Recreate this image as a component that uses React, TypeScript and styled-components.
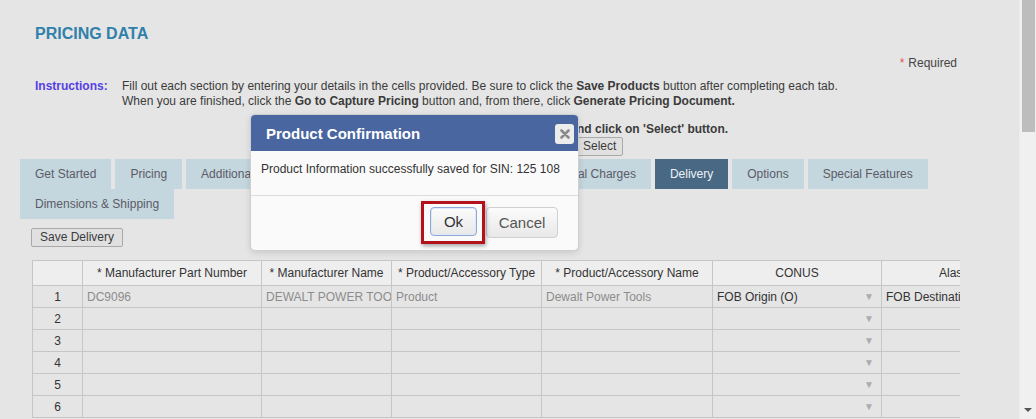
import React from "react";
import styled, { createGlobalStyle } from "styled-components";

const Global = createGlobalStyle`
  html, body { margin: 0; padding: 0; }
  body {
    background: #e5e5e5;
    font-family: "Liberation Sans", Arial, sans-serif;
    font-size: 12px;
    color: #3b3b3b;
    overflow: hidden;
  }
`;

const Shell = styled.div`
  display: flex;
  width: 1036px;
  height: 419px;
  overflow: hidden;
  position: relative;
`;

const Main = styled.div`
  flex: 1;
  min-width: 0;
  display: flex;
  flex-direction: column;
  padding: 24px 0 0 0;
`;

const Scrollbar = styled.div`
  width: 17px;
  background: #f0f0f0;
  display: flex;
  flex-direction: column;
  align-items: center;
  justify-content: space-between;
  padding: 0 2px 4px;
  box-sizing: border-box;
  border-left: 1px solid #ececec;
`;

const Thumb = styled.div`
  width: 13px;
  height: 132px;
  background: #bdbdbd;
`;

const Arrow = styled.div`
  width: 0;
  height: 0;
  border-left: 4px solid transparent;
  border-right: 4px solid transparent;
  border-top: 4px solid #555;
  margin-bottom: 3px;
`;

const Title = styled.h1`
  margin: 0 0 0 35px;
  font-size: 16px;
  line-height: 19px;
  font-weight: bold;
  color: #2f80aa;
`;

const RequiredRow = styled.div`
  display: flex;
  justify-content: flex-end;
  padding-right: 62px;
  margin-top: 13px;
  font-size: 12px;
  line-height: 14px;
  color: #444;
`;

const Star = styled.span`
  color: #e05555;
  margin-right: 4px;
`;

const Instructions = styled.div`
  display: grid;
  grid-template-columns: 87px 1fr;
  margin: 9px 0 0 35px;
  line-height: 15px;
`;

const Label = styled.div`
  color: #5540e6;
  font-weight: bold;
`;

const Lines = styled.div`
  display: flex;
  flex-direction: column;
`;

const StepLine = styled.div`
  margin-top: 13px;
  font-weight: bold;
  padding-left: 315px;
`;

const SelectRow = styled.div`
  display: flex;
  align-items: center;
  gap: 4px;
  padding-left: 442px;
  margin-top: 1px;
`;

const FakeSelect = styled.div`
  width: 128px;
  height: 16px;
  border: 1px solid #aaa;
  background: #f4f4f4;
`;

const PlainButton = styled.button<{ $pad?: number }>`
  font-family: "Liberation Sans", Arial, sans-serif;
  font-size: 12px;
  color: #3b3b3b;
  background: #e0e0e0;
  border: 1px solid #a9a9a9;
  border-radius: 2px;
  padding: 0 ${(p) => p.$pad ?? 8}px;
  height: 19px;
  line-height: 17px;
`;

const Tabs = styled.div`
  display: flex;
  flex-wrap: wrap;
  column-gap: 4px;
  width: 920px;
  margin: 3px 0 0 20px;
`;

const Tab = styled.div<{ $active?: boolean }>`
  height: 30px;
  line-height: 30px;
  padding: 0 15px;
  font-size: 12px;
  background: ${(p) => (p.$active ? "#486884" : "#c4d6de")};
  color: ${(p) => (p.$active ? "#eef2f6" : "#5b5b66")};
`;

const SaveRow = styled.div`
  margin: 9px 0 0 31px;
  display: flex;
`;

const TableWrap = styled.div`
  margin: 13px 0 0 32px;
  width: 928px;
  overflow: hidden;
`;

const Table = styled.table`
  border-collapse: collapse;
  table-layout: fixed;
  width: 1000px;
`;

const Th = styled.th`
  height: 24px;
  background: #eeeeee;
  border: 1px solid #c6c6c6;
  font-weight: normal;
  font-size: 12px;
  color: #333;
  text-align: center;
  white-space: nowrap;
  overflow: hidden;
  padding: 0 4px;
`;

const Td = styled.td<{ $num?: boolean; $muted?: boolean }>`
  height: 21px;
  border: 1px solid #c6c6c6;
  font-size: 12px;
  color: ${(p) => (p.$muted ? "#8c8c8c" : "#333")};
  text-align: ${(p) => (p.$num ? "center" : "left")};
  white-space: nowrap;
  overflow: hidden;
  padding: 0 4px;
`;

const DropCell = styled.div`
  display: flex;
  justify-content: space-between;
  align-items: center;
`;

const DropArrow = styled.span`
  font-size: 10px;
  color: #acacac;
  margin-right: 3px;
`;

/* modal */
const Modal = styled.div`
  position: absolute;
  left: 250px;
  top: 114px;
  width: 329px;
  height: 137px;
  background: #fafafa;
  border: 1px solid #cfcfcf;
  border-radius: 5px;
  box-shadow: 0 2px 6px rgba(0, 0, 0, 0.12);
  display: flex;
  flex-direction: column;
  box-sizing: border-box;
  overflow: hidden;
`;

const ModalHead = styled.div`
  height: 36px;
  background: #4966a0;
  display: flex;
  align-items: center;
  justify-content: space-between;
  padding: 0 4px 0 15px;
  flex-shrink: 0;
`;

const ModalTitle = styled.div`
  font-size: 15px;
  font-weight: bold;
  color: #fff;
`;

const CloseBtn = styled.div`
  width: 19px;
  height: 20px;
  background: #ececec;
  border-radius: 3px;
  display: flex;
  align-items: center;
  justify-content: center;
  margin-top: 1px;
`;

const ModalBody = styled.div`
  height: 45px;
  padding: 11px 10px 0;
  box-sizing: border-box;
  font-size: 12px;
  color: #333;
  border-bottom: 1px solid #dcdcdc;
`;

const ModalFoot = styled.div`
  flex: 1;
  display: flex;
  justify-content: flex-end;
  align-items: flex-start;
  gap: 9px;
  padding: 11px 20px 0 0;
`;

const Highlight = styled.div`
  position: relative;
  &::after {
    content: "";
    position: absolute;
    left: -9px;
    top: -6px;
    width: 58px;
    height: 37px;
    border: 3px solid #b3121a;
    box-shadow: 1px 2px 4px rgba(0, 0, 0, 0.35);
  }
`;

const DlgButton = styled.button<{ $focus?: boolean }>`
  font-family: "Liberation Sans", Arial, sans-serif;
  font-size: 15px;
  height: ${(p) => (p.$focus ? "29px" : "31px")};
  width: ${(p) => (p.$focus ? "47px" : "72px")};
  padding: 0;
  border-radius: 4px;
  color: ${(p) => (p.$focus ? "#333" : "#555")};
  border: 1px solid ${(p) => (p.$focus ? "#8ea9d6" : "#d0d0d0")};
  background: linear-gradient(#fbfbfb, #e8e8e8);
  box-shadow: ${(p) => (p.$focus ? "inset 0 0 0 1px #dfe8f6" : "none")};
`;

const rows = [
  { n: 1, part: "DC9096", maker: "DEWALT POWER TOOLS", type: "Product", name: "Dewalt Power Tools", conus: "FOB Origin (O)", alaska: "FOB Destination" },
  { n: 2 }, { n: 3 }, { n: 4 }, { n: 5 }, { n: 6 },
] as Array<{ n: number; part?: string; maker?: string; type?: string; name?: string; conus?: string; alaska?: string }>;

export default function App() {
  return (
    <Shell>
      <Global />
      <Main>
        <Title>PRICING DATA</Title>
        <RequiredRow>
          <Star>*</Star>Required
        </RequiredRow>
        <Instructions>
          <Label>Instructions:</Label>
          <Lines>
            <span>
              Fill out each section by entering your details in the cells provided. Be sure to click the <b>Save Products</b> button after completing each tab.
            </span>
            <span>
              When you are finished, click the <b>Go to Capture Pricing</b> button and, from there, click <b>Generate Pricing Document.</b>
            </span>
          </Lines>
        </Instructions>
        <StepLine>Choose a SIN from the drop-down list below and click on 'Select' button.</StepLine>
        <SelectRow>
          <FakeSelect />
          <PlainButton $pad={6}>Select</PlainButton>
        </SelectRow>
        <Tabs>
          <Tab>Get Started</Tab>
          <Tab>Pricing</Tab>
          <Tab>Additional Item Information</Tab>
          <Tab>Volume Pricing Discounts</Tab>
          <Tab>Special Charges</Tab>
          <Tab $active>Delivery</Tab>
          <Tab>Options</Tab>
          <Tab>Special Features</Tab>
          <Tab>Dimensions &amp; Shipping</Tab>
        </Tabs>
        <SaveRow>
          <PlainButton>Save Delivery</PlainButton>
        </SaveRow>
        <TableWrap>
          <Table>
            <colgroup>
              <col style={{ width: 50 }} />
              <col style={{ width: 179 }} />
              <col style={{ width: 130 }} />
              <col style={{ width: 150 }} />
              <col style={{ width: 171 }} />
              <col style={{ width: 169 }} />
              <col style={{ width: 151 }} />
            </colgroup>
            <thead>
              <tr>
                <Th />
                <Th>* Manufacturer Part Number</Th>
                <Th>* Manufacturer Name</Th>
                <Th>* Product/Accessory Type</Th>
                <Th>* Product/Accessory Name</Th>
                <Th>CONUS</Th>
                <Th>Alaska</Th>
              </tr>
            </thead>
            <tbody>
              {rows.map((r) => (
                <tr key={r.n}>
                  <Td $num>{r.n}</Td>
                  <Td $muted>{r.part}</Td>
                  <Td $muted>{r.maker}</Td>
                  <Td $muted>{r.type}</Td>
                  <Td $muted>{r.name}</Td>
                  <Td>
                    <DropCell>
                      <span>{r.conus}</span>
                      <DropArrow>▼</DropArrow>
                    </DropCell>
                  </Td>
                  <Td>{r.alaska}</Td>
                </tr>
              ))}
            </tbody>
          </Table>
        </TableWrap>
      </Main>
      <Scrollbar>
        <Thumb />
        <Arrow />
      </Scrollbar>

      <Modal>
        <ModalHead>
          <ModalTitle>Product Confirmation</ModalTitle>
          <CloseBtn>
            <svg width="10" height="10" viewBox="0 0 10 10">
              <path d="M1.5 1.5 L8.5 8.5 M8.5 1.5 L1.5 8.5" stroke="#8a8a8a" strokeWidth="2.6" strokeLinecap="round" />
            </svg>
          </CloseBtn>
        </ModalHead>
        <ModalBody>Product Information successfully saved for SIN: 125 108</ModalBody>
        <ModalFoot>
          <Highlight>
            <DlgButton $focus>Ok</DlgButton>
          </Highlight>
          <DlgButton>Cancel</DlgButton>
        </ModalFoot>
      </Modal>
    </Shell>
  );
}
